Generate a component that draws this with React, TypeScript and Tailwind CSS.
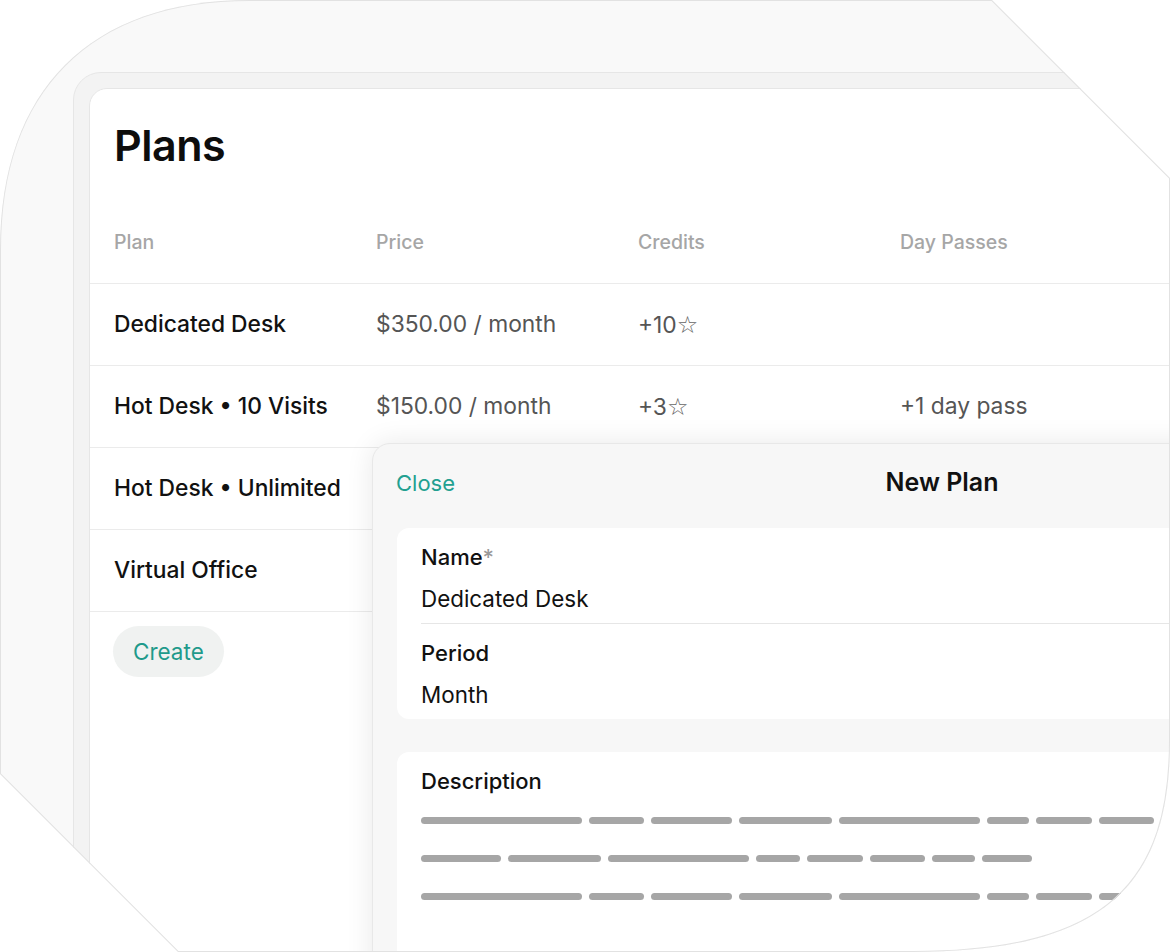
const rows = [
  { name: 'Dedicated Desk', price: '$350.00 / month', credits: '+10', star: true, passes: '' },
  { name: 'Hot Desk • 10 Visits', price: '$150.00 / month', credits: '+3', star: true, passes: '+1 day pass' },
  { name: 'Hot Desk • Unlimited', price: '', credits: '', star: false, passes: '' },
  { name: 'Virtual Office', price: '', credits: '', star: false, passes: '' },
]

const line1 = [161, 55, 81, 93, 141, 42, 56, 55]
const line2 = [80, 93, 141, 44, 56, 55, 43, 50]

const shape =
  'M0 250C0 90 90 0 250 0L992 0L1170 178L1170 740C1170 880 1110 952 913 952L178 952L0 774Z'

function Bars({ widths }: { widths: number[] }) {
  return (
    <div className="flex h-[38px] items-center gap-[7px]">
      {widths.map((w, i) => (
        <div key={i} className="h-[7px] shrink-0 rounded-full bg-[#a6a6a6]" style={{ width: w }} />
      ))}
    </div>
  )
}

export default function App() {
  return (
    <div className="bg-white font-[Inter,sans-serif]">
      <div className="relative h-[952px] w-[1170px] overflow-hidden bg-[#f9f9f9] [clip-path:path('M0_250C0_90_90_0_250_0L992_0L1170_178L1170_740C1170_880_1110_952_913_952L178_952L0_774Z')]">
        <div className="pl-[73px] pt-[72px]">
          <div className="h-[1000px] w-[1200px] rounded-[28px] border border-[#e6e6e6] bg-[#f3f3f3] p-[15px]">
            <div className="h-full rounded-[18px] border border-[#e6e6e6] bg-white">
              <h1 className="px-[24px] pt-[30px] text-[43px] leading-[52px] font-semibold tracking-[-0.5px] text-[#0d0d0d]">
                Plans
              </h1>
              <div className="mt-[31px] grid h-[82px] grid-cols-[262px_262px_262px_1fr] items-center border-b border-[#ebebeb] px-[24px] text-[19.5px] font-medium text-[#a6a6a6]">
                <div>Plan</div>
                <div>Price</div>
                <div>Credits</div>
                <div>Day Passes</div>
              </div>
              {rows.map((r) => (
                <div
                  key={r.name}
                  className="grid h-[82px] grid-cols-[262px_262px_262px_1fr] items-center border-b border-[#ebebeb] px-[24px] text-[22.8px]"
                >
                  <div className="font-medium text-[#111]">{r.name}</div>
                  <div className="text-[#555]">{r.price}</div>
                  <div className="text-[#555]">
                    {r.credits}
                    {r.star && <span className="font-['DejaVu_Sans'] text-[24px] text-[#666]">☆</span>}
                  </div>
                  <div className="text-[#555]">{r.passes}</div>
                </div>
              ))}
              <div className="px-[23px] pt-[14px]">
                <button className="h-[51px] rounded-full bg-[#f0f2f1] px-[20px] text-[22.5px] text-[#1f9a8b]">
                  Create
                </button>
              </div>
            </div>
          </div>
        </div>

        <div className="absolute top-[443px] left-[372px] h-[560px] w-[1140px] rounded-[18px] border border-[#e8e8e8] bg-[#f7f7f7] shadow-[0_0_28px_rgba(0,0,0,0.09)]">
          <div className="relative flex h-[78px] items-center px-[23px]">
            <span className="text-[22px] text-[#22a090]">Close</span>
            <span className="absolute left-1/2 -translate-x-1/2 text-[25px] font-semibold text-[#111]">
              New Plan
            </span>
          </div>
          <div className="px-[24px] pt-[6px]">
            <div className="rounded-[12px] bg-white px-[24px]">
              <div className="border-b border-[#e6e6e6] pt-[14px] pb-[9px]">
                <div className="text-[22px] leading-[30px] font-medium text-[#111]">
                  Name<span className="text-[#9a9a9a]">*</span>
                </div>
                <div className="mt-[12px] text-[22.4px] leading-[30px] text-[#111]">Dedicated Desk</div>
              </div>
              <div className="pt-[14px] pb-[9px]">
                <div className="text-[22px] leading-[30px] font-medium text-[#111]">Period</div>
                <div className="mt-[12px] text-[22.4px] leading-[30px] text-[#111]">Month</div>
              </div>
            </div>
            <div className="mt-[33px] h-[300px] rounded-[12px] bg-white px-[24px] pt-[14px]">
              <div className="text-[22px] leading-[30px] font-medium text-[#111]">Description</div>
              <div className="mt-[5px]">
                <Bars widths={line1} />
                <Bars widths={line2} />
                <Bars widths={line1} />
              </div>
            </div>
          </div>
        </div>

        <svg className="pointer-events-none absolute inset-0" width="1170" height="952" viewBox="0 0 1170 952">
          <path d={shape} fill="none" stroke="#e2e2e2" strokeWidth="2" />
        </svg>
      </div>
    </div>
  )
}
